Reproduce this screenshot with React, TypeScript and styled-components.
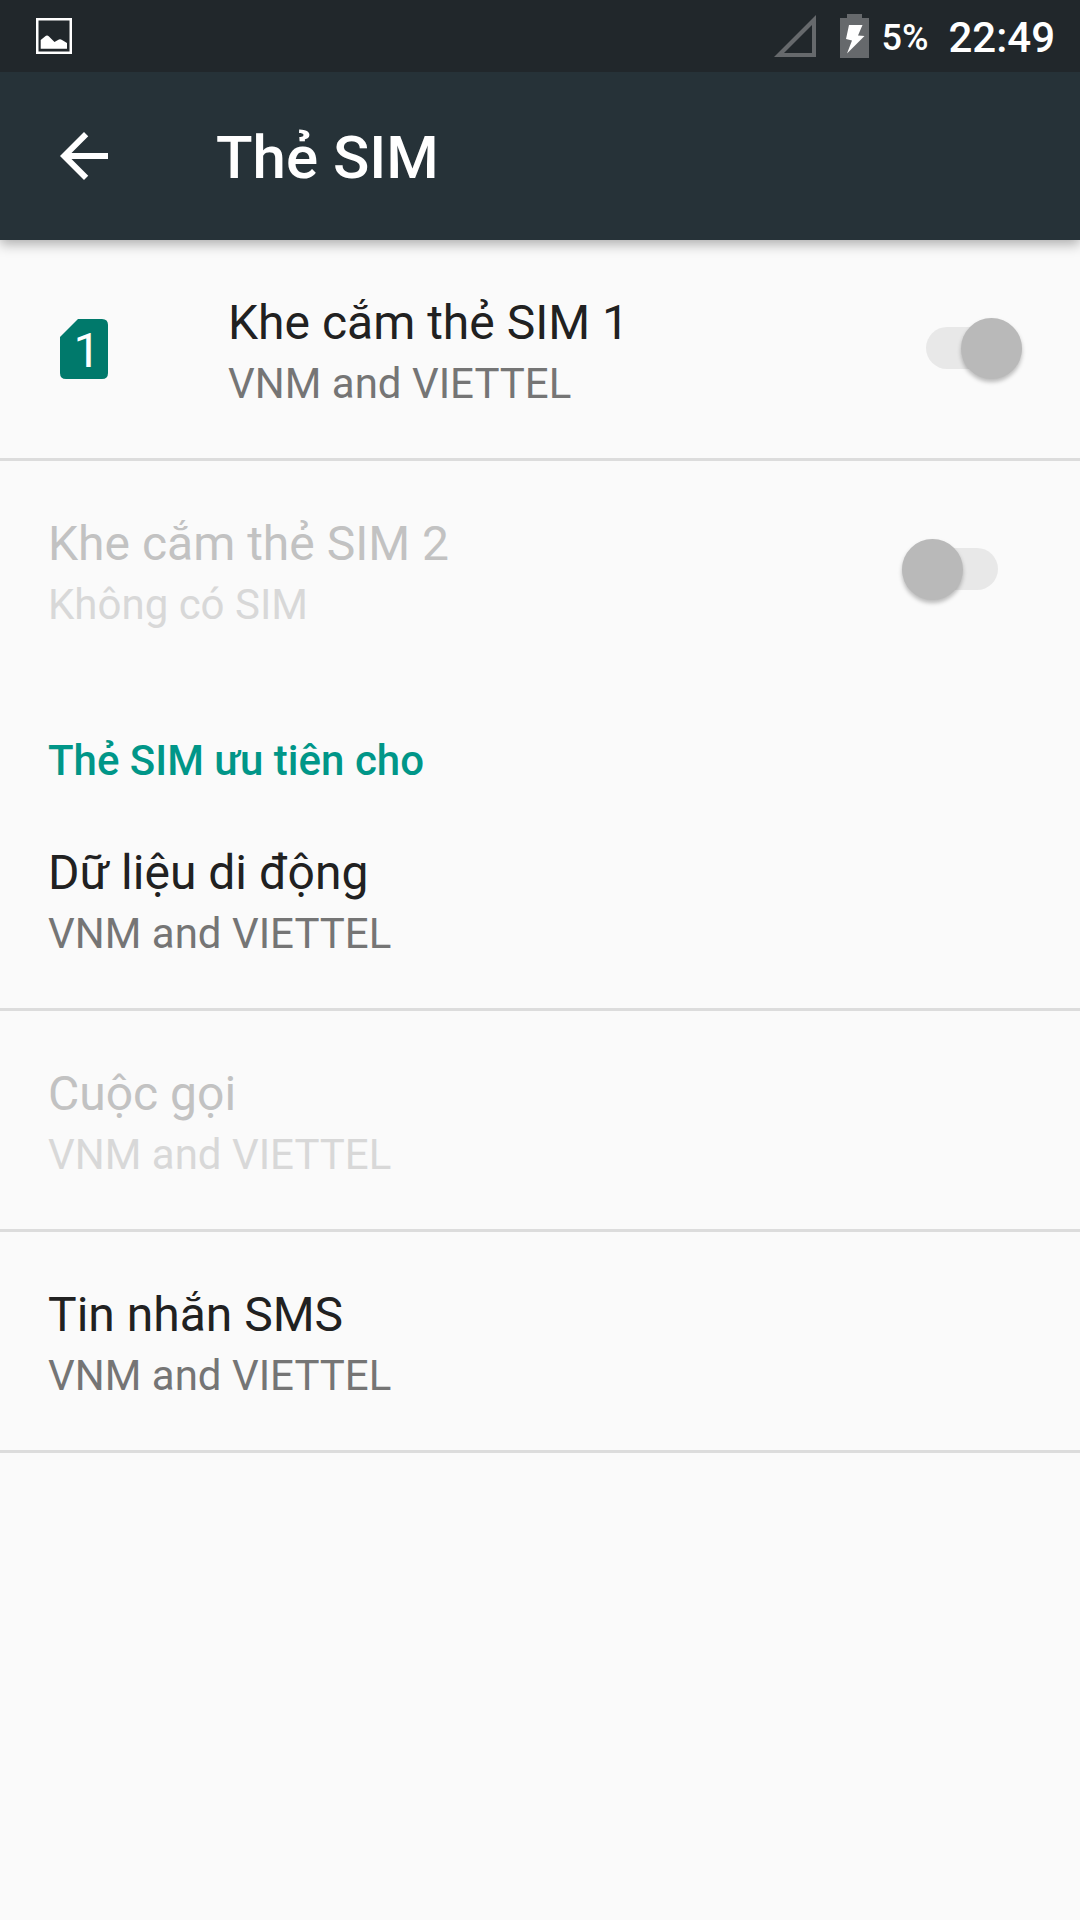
import React from 'react';
import styled, { createGlobalStyle, css } from 'styled-components';

const GlobalStyle = createGlobalStyle`
  * { box-sizing: border-box; }
  body { margin: 0; background: #fafafa; font-family: Roboto, "Noto Sans", sans-serif; }
`;
const Screen = styled.div`
  min-height: 100vh;
  background: #fafafa;
`;
const StatusBar = styled.div`
  position: relative;
  z-index: 2;
  display: flex;
  align-items: center;
  height: 72px;
  padding: 0 25px 0 36px;
  background: #21272b;
  color: #fff;
`;
const StatusIcons = styled.div`
  display: flex;
  align-items: center;
  margin-left: auto;
`;
const Battery = styled.span`
  margin-left: 12px;
  padding-top: 4px;
  font-size: 36px;
  font-weight: 500;
  line-height: 48px;
`;
const Clock = styled.time`
  margin-left: 20px;
  padding-top: 4px;
  font-size: 42px;
  font-weight: 500;
  line-height: 48px;
`;
const BatteryIcon = styled.svg`
  margin-left: 24px;
`;
const Toolbar = styled.header`
  position: relative;
  display: flex;
  align-items: center;
  height: 168px;
  padding: 0 48px;
  background: #263238;
  color: #fff;
  box-shadow: 0 4px 12px rgba(0, 0, 0, 0.32);
`;
const BackButton = styled.button`
  display: flex;
  width: 168px;
  padding: 0;
  border: 0;
  background: none;
  color: inherit;
`;
const Title = styled.h1`
  margin: 0;
  padding-top: 4px;
  font-size: 60px;
  font-weight: 500;
  line-height: 72px;
`;
const List = styled.ul`
  margin: 0;
  padding: 0;
  list-style: none;
`;
const Row = styled.li<{ $divided?: boolean; $withIcon?: boolean }>`
  display: flex;
  align-items: center;
  height: ${p => (p.$divided ? 221 : 218)}px;
  padding: 0 ${p => (p.$withIcon ? 58 : 82)}px 0 48px;
  ${p => p.$divided && css`border-bottom: 3px solid #dcdcdc;`}
`;
const RowIcon = styled.span`
  display: flex;
  width: 180px;
`;
const RowText = styled.div`
  flex: 1;
  padding-top: 10px;
`;
const Name = styled.div<{ $disabled?: boolean }>`
  display: block;
  font-size: 48px;
  line-height: 60px;
  color: ${p => (p.$disabled ? '#c2c2c2' : '#212121')};
`;
const Summary = styled.div<{ $disabled?: boolean }>`
  font-size: 42px;
  line-height: 62px;
  color: ${p => (p.$disabled ? '#d8d8d8' : '#757575')};
`;
const SectionTitle = styled.h2`
  margin: 0;
  padding: 55px 48px 2px;
  font-size: 42px;
  font-weight: 500;
  line-height: 54px;
  color: #009688;
`;
const Switch = styled.input`
  position: relative;
  appearance: none;
  width: 96px;
  height: 62px;
  margin: 0;
  &::before {
    content: '';
    position: absolute;
    inset: 9px 0 11px;
    border-radius: 21px;
    background: #e8e8e8;
  }
  &::after {
    content: '';
    position: absolute;
    top: 0;
    left: 0;
    width: 61px;
    height: 61px;
    border-radius: 50%;
    background: #b9b9b9;
    box-shadow: 0 3px 4px rgba(0, 0, 0, 0.26);
  }
  &:checked::after { left: 35px; }
`;

export default function App() {
  return (
    <Screen>
      <GlobalStyle />
      <StatusBar>
        <svg width="36" height="36" viewBox="0 0 36 36" fill="none">
          <rect x="1.25" y="1.25" width="33.5" height="33.5" stroke="#fff" strokeWidth="2.5" />
          <path d="M4.7 22L9 18.5Q11 16.5 13 18.5L18.5 24L22 22Q24 20.5 26 22L31 25V30.7H4.7Z" fill="#fff" />
        </svg>
        <StatusIcons>
          <svg width="42" height="42" viewBox="0 0 42 42">
            <path fillRule="evenodd" d="M42 0V42H0ZM38 10V38H10Z" fill="#66696c" />
          </svg>
          <BatteryIcon width="29" height="44" viewBox="0 0 29 44">
            <path d="M7 0H22V4H29V44H0V4H7Z" fill="#66696c" />
            <path d="M9 11H22.5L18 21.5L24.5 22L7 39.5L12 26.5L6 25Z" fill="#fff" />
          </BatteryIcon>
          <Battery>5%</Battery>
          <Clock>22:49</Clock>
        </StatusIcons>
      </StatusBar>
      <Toolbar>
        <BackButton type="button" aria-label="Quay lại">
          <svg width="72" height="72" viewBox="0 0 24 24" fill="currentColor">
            <path d="M20 11H7.83l5.59-5.59L12 4l-8 8 8 8 1.41-1.41L7.83 13H20v-2z" />
          </svg>
        </BackButton>
        <Title>Thẻ SIM</Title>
      </Toolbar>
      <List>
        <Row $divided $withIcon>
          <RowIcon>
            <svg width="72" height="72" viewBox="0 0 72 72">
              <path d="M30 6H54Q60 6 60 12V60Q60 66 54 66H18Q12 66 12 60V24Z" fill="#00796b" />
              <text x="39" y="54" fill="#fff" fontSize="48" textAnchor="middle">1</text>
            </svg>
          </RowIcon>
          <RowText>
            <Name as="label" htmlFor="sim1">Khe cắm thẻ SIM 1</Name>
            <Summary>VNM and VIETTEL</Summary>
          </RowText>
          <Switch id="sim1" type="checkbox" defaultChecked disabled />
        </Row>
        <Row>
          <RowText>
            <Name as="label" htmlFor="sim2" $disabled>Khe cắm thẻ SIM 2</Name>
            <Summary $disabled>Không có SIM</Summary>
          </RowText>
          <Switch id="sim2" type="checkbox" disabled />
        </Row>
      </List>
      <SectionTitle>Thẻ SIM ưu tiên cho</SectionTitle>
      <List>
        <Row $divided>
          <RowText>
            <Name>Dữ liệu di động</Name>
            <Summary>VNM and VIETTEL</Summary>
          </RowText>
        </Row>
        <Row $divided>
          <RowText>
            <Name $disabled>Cuộc gọi</Name>
            <Summary $disabled>VNM and VIETTEL</Summary>
          </RowText>
        </Row>
        <Row $divided>
          <RowText>
            <Name>Tin nhắn SMS</Name>
            <Summary>VNM and VIETTEL</Summary>
          </RowText>
        </Row>
      </List>
    </Screen>
  );
}
